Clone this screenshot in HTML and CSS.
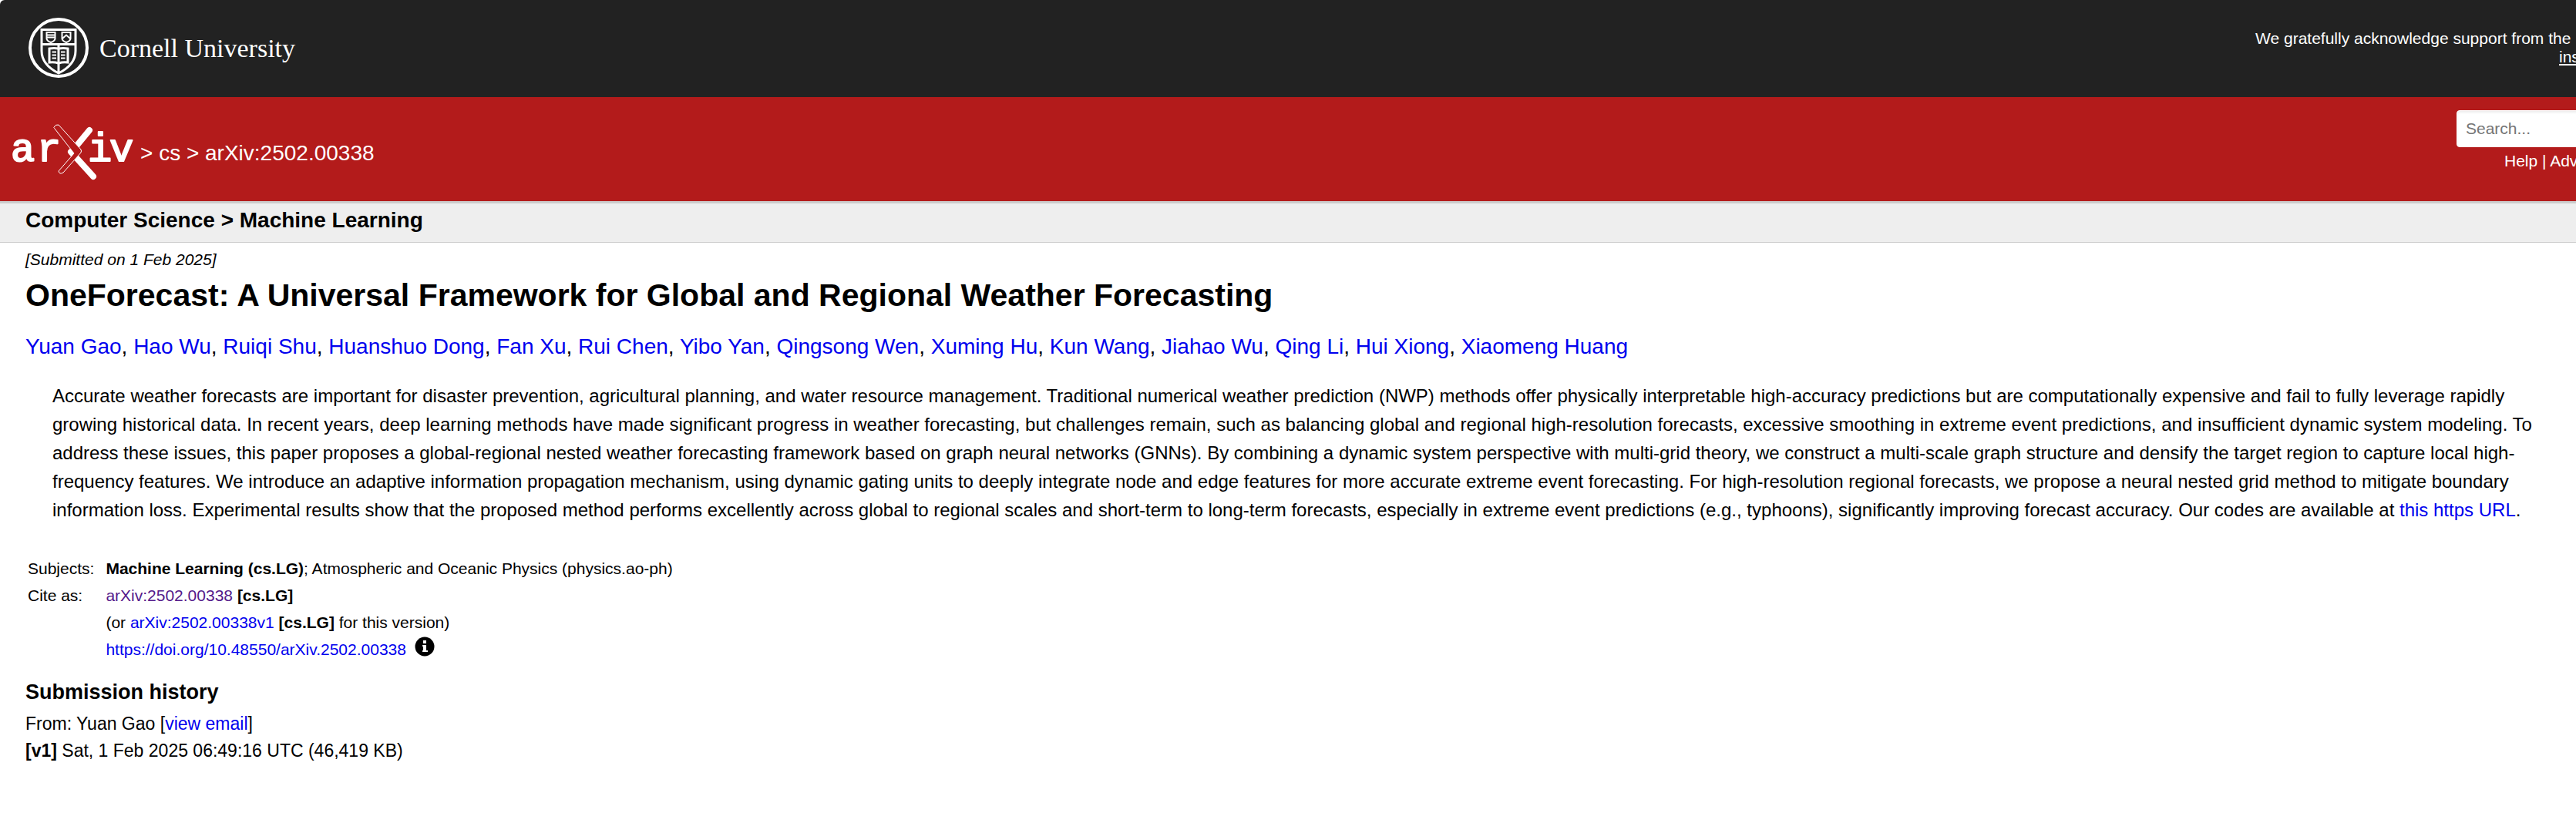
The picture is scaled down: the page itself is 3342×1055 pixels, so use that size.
FILE: index.html
```html
<!DOCTYPE html>
<html lang="en">
<head>
<meta charset="utf-8">
<title>[2502.00338] OneForecast: A Universal Framework for Global and Regional Weather Forecasting</title>
<link rel="stylesheet" href="styles.css">
</head>
<body>
<header class="site-header">
  <div class="cornell-bar">
    <a class="cornell" href="#">
      <svg class="seal" viewBox="0 0 78 78" fill="none" stroke="#fff" aria-hidden="true">
        <circle cx="39" cy="39" r="37" stroke-width="4"/>
        <path stroke-width="3" d="M17 15.500H61V43C61 58 49 67 39 72C29 67 17 58 17 43ZM17 34.500H61M39 35V72"/>
        <path stroke-width="2" d="M23.500 19H34.500V27Q34.500 30 29 32Q23.500 30 23.500 27ZM23.500 22.500H34.500M23.500 25.500H34.500M43.500 19H54.500V27Q54.500 30 49 32Q43.500 30 43.500 27ZM44 27L49 22.500L54 27"/>
        <path stroke-width="3" d="M39 40Q33 39 27 40V58Q33 57 39 59Q45 57 51 58V40Q45 39 39 40Z"/>
        <path stroke-width="2" d="M30.500 44.500H36M30.500 48.500H36M30.500 52.500H36M42 44.500H47.500M42 48.500H47.500M42 52.500H47.500"/>
      </svg>
      <span class="cornell-name">Cornell University</span>
    </a>
    <p class="support">We gratefully acknowledge support from the <a class="support-link" href="#">institutions</a></p>
  </div>
  <div class="arxiv-bar">
    <div class="crumbs">
      <a class="arxiv-logo" href="#" aria-label="arXiv">
        <svg class="arxiv-mark" viewBox="0 0 160 76" fill="none" stroke="#fff" stroke-linecap="round">
          <text class="wordmark" y="51"><tspan x="0">a</tspan><tspan x="34">r</tspan><tspan x="100">i</tspan><tspan x="128">v</tspan></text>
          <path stroke-width="8" d="M102 11L83 34"/>
          <path stroke-width="8" d="M78 39L107 71"/>
          <path class="blade" stroke-width="1" d="M56 7Q58 3 62 4L91 36Q92 38 91 40L68 66Q63 69 62 64L82 41L57 9Z"/>
        </svg>
      </a>
      <span class="path">&gt; <a href="#">cs</a> &gt; arXiv:2502.00338</span>
    </div>
    <form class="search">
      <input class="search-box" type="text" placeholder="Search..." aria-label="Search term or terms">
      <p class="search-links"><a href="#">Help</a> | <a href="#">Advanced Search</a></p>
    </form>
  </div>
</header>
<div class="subject-bar"><h1>Computer Science &gt; Machine Learning</h1></div>
<main class="paper">
  <div class="dateline">[Submitted on 1 Feb 2025]</div>
  <h1 class="title">OneForecast: A Universal Framework for Global and Regional Weather Forecasting</h1>
  <div class="authors"><a href="#">Yuan Gao</a>, <a href="#">Hao Wu</a>, <a href="#">Ruiqi Shu</a>, <a href="#">Huanshuo Dong</a>, <a href="#">Fan Xu</a>, <a href="#">Rui Chen</a>, <a href="#">Yibo Yan</a>, <a href="#">Qingsong Wen</a>, <a href="#">Xuming Hu</a>, <a href="#">Kun Wang</a>, <a href="#">Jiahao Wu</a>, <a href="#">Qing Li</a>, <a href="#">Hui Xiong</a>, <a href="#">Xiaomeng Huang</a></div>
  <blockquote class="abstract">Accurate weather forecasts are important for disaster prevention, agricultural planning, and water resource management. Traditional numerical weather prediction (NWP) methods offer physically interpretable high-accuracy predictions but are computationally expensive and fail to fully leverage rapidly growing historical data. In recent years, deep learning methods have made significant progress in weather forecasting, but challenges remain, such as balancing global and regional high-resolution forecasts, excessive smoothing in extreme event predictions, and insufficient dynamic system modeling. To address these issues, this paper proposes a global-regional nested weather forecasting framework based on graph neural networks (GNNs). By combining a dynamic system perspective with multi-grid theory, we construct a multi-scale graph structure and densify the target region to capture local high-frequency features. We introduce an adaptive information propagation mechanism, using dynamic gating units to deeply integrate node and edge features for more accurate extreme event forecasting. For high-resolution regional forecasts, we propose a neural nested grid method to mitigate boundary information loss. Experimental results show that the proposed method performs excellently across global to regional scales and short-term to long-term forecasts, especially in extreme event predictions (e.g., typhoons), significantly improving forecast accuracy. Our codes are available at <a href="#">this https URL</a>.</blockquote>
  <table class="meta">
    <tr><th scope="row">Subjects:</th><td><b>Machine Learning (cs.LG)</b>; Atmospheric and Oceanic Physics (physics.ao-ph)</td></tr>
    <tr><th scope="row">Cite as:</th><td><a class="visited" href="#">arXiv:2502.00338</a> <b>[cs.LG]</b></td></tr>
    <tr><th></th><td>(or <a href="#">arXiv:2502.00338v1</a> <b>[cs.LG]</b> for this version)</td></tr>
    <tr><th></th><td><a href="#">https://doi.org/10.48550/arXiv.2502.00338</a>
      <svg class="info" viewBox="0 0 26 26" aria-hidden="true"><circle cx="13" cy="13" r="12.500"/><path fill="#fff" d="M11 5H15V9H11ZM10 11H15V18H17V20H10V18H11V13H10Z"/></svg></td></tr>
  </table>
  <section class="history">
    <h2>Submission history</h2>
    <div>From: Yuan Gao [<a href="#">view email</a>]</div>
    <div><b>[v1]</b> Sat, 1 Feb 2025 06:49:16 UTC (46,419 KB)</div>
  </section>
</main>
</body>
</html>
```
FILE: styles.css
```css
* { box-sizing: border-box; }
body {
  margin: 0;
  background: #fff;
  color: #000;
  font-family: "Liberation Sans", Arial, sans-serif;
  font-size: 21px;
  overflow-x: hidden;
}
h1, h2, p, blockquote { margin: 0; }
a { color: #00e; text-decoration: none; }

.site-header { color: #fff; overflow: hidden; }
.site-header a { color: #fff; }

.cornell-bar {
  display: flex;
  justify-content: space-between;
  align-items: flex-start;
  height: 126px;
  padding: 23px 0 0 37px;
  background: #222;
  border-top-left-radius: 6px;
}
.cornell { display: flex; align-items: center; gap: 14px; }
.seal { width: 78px; height: 78px; }
.cornell-name {
  padding-top: 2px;
  font-family: "Liberation Serif", "Times New Roman", serif;
  font-size: 34px;
  line-height: 40px;
}
.support {
  width: 416px;
  padding-top: 15px;
  line-height: 24px;
  white-space: nowrap;
}
.support-link { display: block; padding-left: 394px; }
.site-header .support-link { text-decoration: underline; }

.arxiv-bar {
  display: flex;
  justify-content: space-between;
  align-items: flex-start;
  height: 135px;
  background: #b31b1b;
}
.crumbs { display: flex; align-items: center; gap: 8px; padding: 32px 0 0 14px; }
.arxiv-logo { display: flex; }
.arxiv-mark { width: 160px; height: 76px; }
.wordmark {
  font-family: "Liberation Mono", "Courier New", monospace;
  font-size: 52px;
  fill: #fff;
  stroke-width: 2px;
  stroke-linejoin: round;
}
.blade { fill: #b31b1b; }
.path { font-size: 28px; line-height: 34px; padding-top: 6px; }
.search { width: 155px; padding-top: 17px; }
.search-box {
  display: block;
  width: 240px;
  height: 48px;
  padding: 0 11px;
  border: 1px solid #fff;
  border-radius: 4px;
  box-shadow: inset 0 2px 3px #eee;
  font: inherit;
}
.search-box::placeholder { color: #757575; }
.search-links { padding: 6px 0 0 62px; line-height: 24px; white-space: nowrap; }

.subject-bar {
  padding: 0 33px 7px;
  background: #eee;
  border-top: 3px solid #ccc;
  border-bottom: 1px solid #ccc;
}
.subject-bar h1 { font-size: 28px; line-height: 43px; }

.paper { padding: 10px 33px 40px; }
.dateline { font-style: italic; line-height: 24px; }
.title { margin-top: 11px; font-size: 41px; line-height: 46px; }
.authors { margin-top: 27px; font-size: 28px; line-height: 34px; }
.abstract { margin-top: 28px; padding: 0 12px 0 35px; font-size: 24px; line-height: 37px; }
.meta { margin-top: 40px; border-collapse: collapse; line-height: 35px; }
.meta th { padding: 0 15px 0 3px; font-weight: 400; text-align: left; }
.meta td { padding: 0; }
.meta .visited { color: #551a8b; }
.info { width: 26px; height: 26px; margin-left: 5px; vertical-align: -2px; }
.history { margin-top: 21px; font-size: 23px; line-height: 35px; }
.history h2 { margin-bottom: 7px; font-size: 27px; line-height: 34px; }
```
